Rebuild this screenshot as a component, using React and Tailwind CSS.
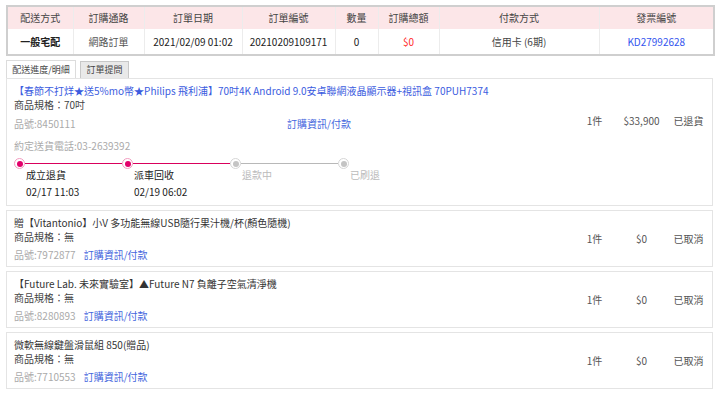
import React from 'react';

// 訂單明細頁 - 表頭 + 商品清單
const head = ['配送方式', '訂購通路', '訂單日期', '訂單編號', '數量', '訂購總額', '付款方式', '發票編號'];
const colW = ['w-[66px]', 'w-[71px]', 'w-[98px]', 'w-[93px]', 'w-[43px]', 'w-[61px]', 'w-[160px]', 'w-[115px]'];

const steps = [
    { label: '成立退貨', date: '02/17 11:03', done: true },
    { label: '派車回收', date: '02/19 06:02', done: true },
    { label: '退款中', date: '', done: false },
    { label: '已刷退', date: '', done: false },
];

const gifts = [
    { name: '贈【Vitantonio】小V 多功能無線USB隨行果汁機/杯(顏色隨機)', no: '7972877' },
    { name: '【Future Lab. 未來實驗室】▲Future N7 負離子空氣清淨機', no: '8280893' },
    { name: '微軟無線鍵盤滑鼠組 850(贈品)', no: '7710553' },
];

const Dot = ({ on }) => (
    <span className={`flex h-[11px] w-[11px] shrink-0 items-center justify-center rounded-full border bg-white ${on ? 'border-[#f29cc0]' : 'border-[#d6d6d6]'}`}>
        <span className={`h-[6px] w-[6px] rounded-full ${on ? 'bg-[#e2006b]' : 'bg-[#c4c4c4]'}`}></span>
    </span>
);

const RightCols = ({ price, status }) => (
    <div className="flex shrink-0 text-[10px] leading-[14px] text-[#555]">
        <div className="w-[47px] text-center">1件</div>
        <div className="w-[47px] text-center">{price}</div>
        <div className="w-[47px] text-center">{status}</div>
    </div>
);

const App = () => {
    return (
        <div className="min-h-[393px] w-[720px] bg-white px-[6px] pt-[5px] font-['Noto_Sans_CJK_TC','Liberation_Sans',sans-serif] text-[#333]">
            {/* 訂單資訊表 */}
            <table className="w-[707px] table-fixed border-collapse border-2 border-[#cfcfcf] text-[10px]">
                <thead>
                    <tr className="h-[23px] bg-[#fce6e8] text-[#444]">
                        {head.map((h, i) => (
                            <th key={h} className={`${colW[i]} border-r border-[#ececec] p-0 text-center font-normal leading-[14px]`}>{h}</th>
                        ))}
                    </tr>
                </thead>
                <tbody>
                    <tr className="h-[26px] bg-white text-center leading-[14px]">
                        <td className="border-r border-[#ececec] font-bold text-[#222]">一般宅配</td>
                        <td className="border-r border-[#ececec] text-[#555]">網路訂單</td>
                        <td className="whitespace-nowrap border-r border-[#ececec] text-[#222]">2021/02/09 01:02</td>
                        <td className="border-r border-[#ececec] text-[#222]">20210209109171</td>
                        <td className="border-r border-[#ececec] text-[#222]">0</td>
                        <td className="border-r border-[#ececec] text-[#ff2a2a]">$0</td>
                        <td className="border-r border-[#ececec] text-[#444]">信用卡 (6期)</td>
                        <td className="text-[#3355ee]">KD27992628</td>
                    </tr>
                </tbody>
            </table>

            {/* 分頁 */}
            <div className="mt-[4px] flex items-end gap-[4px] whitespace-nowrap text-[9px] leading-[12px]">
                <div className="flex h-[18px] w-[70px] items-center justify-center border border-b-0 border-[#dcdcdc] bg-white text-[#444]">配送進度/明細</div>
                <div className="flex h-[17px] w-[49px] items-center justify-center border border-b-0 border-[#c8c8c8] bg-[#e9e9e9] text-[#444]">訂單提問</div>
            </div>

            {/* 主商品 */}
            <div className="flex w-[707px] border border-[#e4e4e4] bg-white">
                <div className="flex-1 pl-[7px] pt-[5px] pb-[6px] text-[10px] leading-[14px]">
                    <div className="whitespace-nowrap text-[#3b5ce0]">【春節不打烊★送5%mo幣★Philips 飛利浦】70吋4K Android 9.0安卓聯網液晶顯示器+視訊盒 70PUH7374</div>
                    <div className="text-[#444]">商品規格：70吋</div>
                    <div className="mt-[5px] flex">
                        <span className="w-[273px] text-[#aaa]">品號:8450111</span>
                        <span className="text-[#4466dd]">訂購資訊/付款</span>
                    </div>
                    <div className="mt-[8px] text-[#aaa]">約定送貨電話:03-2639392</div>
                    <div className="mt-[5px] flex">
                        {steps.map((s, i) => (
                            <div key={s.label} className={i < 3 ? 'w-[108px]' : 'w-[60px]'}>
                                <div className="flex items-center">
                                    <Dot on={s.done} />
                                    {i < 3 && (
                                        <span className={`h-[1.5px] flex-1 ${i < 2 ? 'bg-[#d9005c]' : 'bg-[#b8b8b8]'}`}></span>
                                    )}
                                </div>
                                <div className={`-mt-[1px] whitespace-nowrap pl-[12px] leading-[14px] ${s.done ? 'text-[#222]' : 'text-[#bbb]'}`}>{s.label}</div>
                                {s.date && <div className="mt-[3px] pl-[12px] leading-[14px] text-[#222]">{s.date}</div>}
                            </div>
                        ))}
                    </div>
                </div>
                <div className="pt-[35px]">
                    <RightCols price="$33,900" status="已退貨" />
                </div>
            </div>

            {/* 贈品 */}
            {gifts.map((g) => (
                <div key={g.no} className="mt-[4px] flex h-[57px] w-[707px] items-center border border-[#e4e4e4] bg-white">
                    <div className="flex-1 pl-[7px] text-[10px] leading-[14px]">
                        <div className="whitespace-nowrap text-[#333]">{g.name}</div>
                        <div className="text-[#444]">商品規格：無</div>
                        <div className="mt-[4px] flex gap-[8px]">
                            <span className="text-[#aaa]">品號:{g.no}</span>
                            <span className="text-[#4466dd]">訂購資訊/付款</span>
                        </div>
                    </div>
                    <RightCols price="$0" status="已取消" />
                </div>
            ))}
        </div>
    );
};

export default App;
